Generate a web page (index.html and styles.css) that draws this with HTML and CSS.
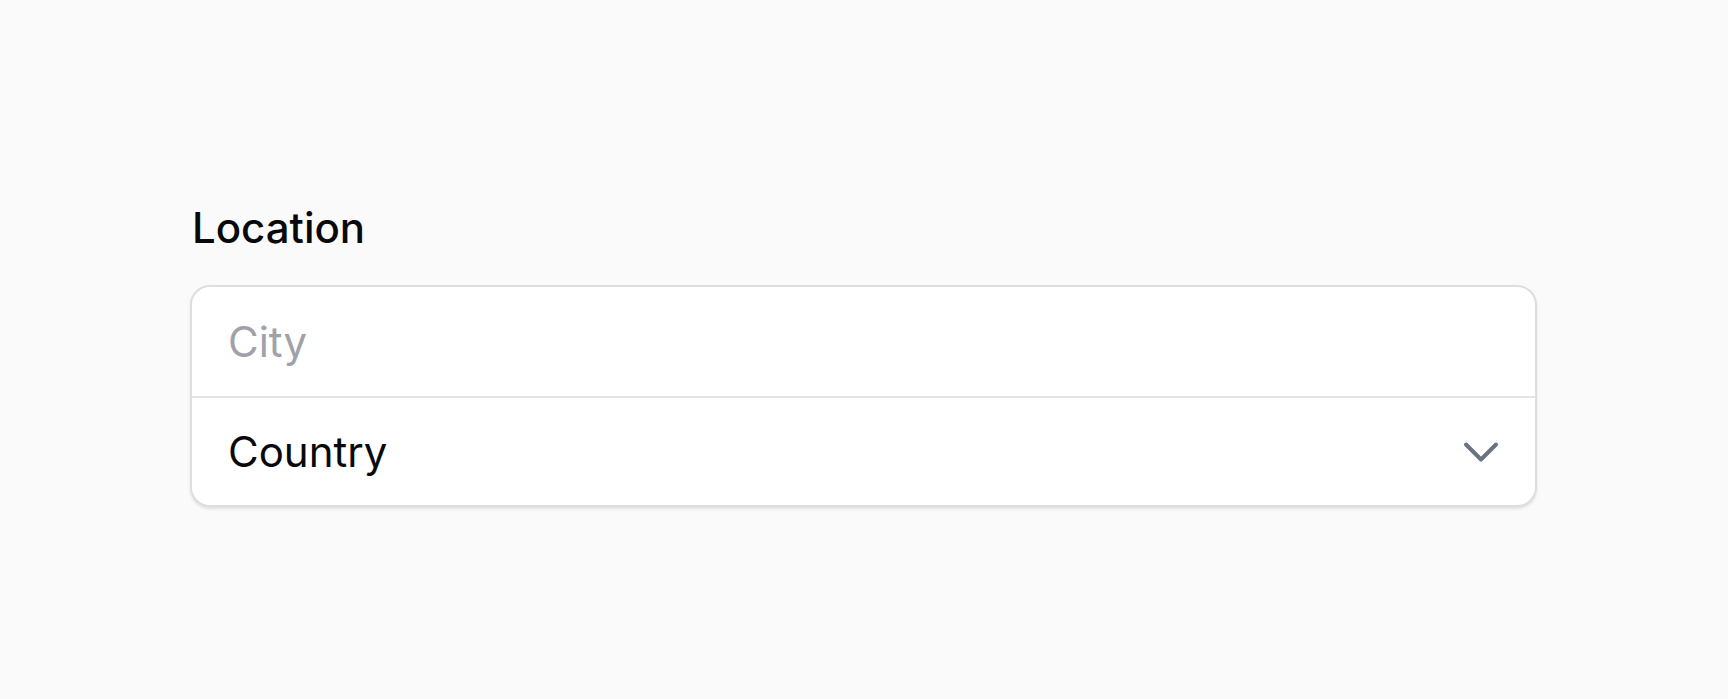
FILE: index.html
```html
<!DOCTYPE html>
<html lang="en">
<head>
<meta charset="utf-8">
<title>Location</title>
<link rel="stylesheet" href="styles.css">
</head>
<body>
<main class="page">
  <fieldset class="group">
    <legend class="label">Location</legend>
    <div class="field">
      <div class="row">
        <input class="input" type="text" placeholder="City">
      </div>
      <div class="row row-select">
        <span class="value">Country</span>
        <svg class="chevron" viewBox="0 0 24 24" fill="none" stroke="currentColor" stroke-width="2" stroke-linecap="round" stroke-linejoin="round" aria-hidden="true">
          <path d="M19.5 8.25l-7.5 7.5-7.5-7.5"/>
        </svg>
      </div>
    </div>
  </fieldset>
</main>
</body>
</html>
```
FILE: styles.css
```css
* { box-sizing: border-box; }
html, body { margin: 0; padding: 0; }
body {
  background: #fafafa;
  font-family: Inter, "Noto Sans", sans-serif;
  color: #09090b;
  height: 699px;
  overflow: hidden;
}
.page {
  padding: 203px 0 0 190px;
}
.group {
  border: 0;
  margin: 0;
  padding: 0;
  width: 1347px;
}
.label {
  padding: 0 0 0 2px;
  font-size: 42px;
  font-weight: 500;
  line-height: 50px;
  margin-bottom: 32px;
  float: left;
  width: 100%;
}
.field {
  clear: both;
  background: #fff;
  border: 2px solid #dedee1;
  border-radius: 20px;
  box-shadow: 0 2px 3px rgba(0, 0, 0, 0.10);
  overflow: hidden;
}
.row {
  height: 109px;
  display: flex;
  align-items: center;
  padding: 0 30px 0 36px;
}
.row + .row {
  border-top: 2px solid #e4e4e7;
  height: 109px;
}
.input {
  border: 0;
  outline: none;
  background: transparent;
  font-family: inherit;
  font-size: 42px;
  color: #09090b;
  padding: 0;
  width: 100%;
}
.input::placeholder { color: #a1a1aa; }
.value {
  flex: 1;
  font-size: 42px;
}
.chevron {
  width: 48px;
  height: 48px;
  color: #6b7280;
}
```
